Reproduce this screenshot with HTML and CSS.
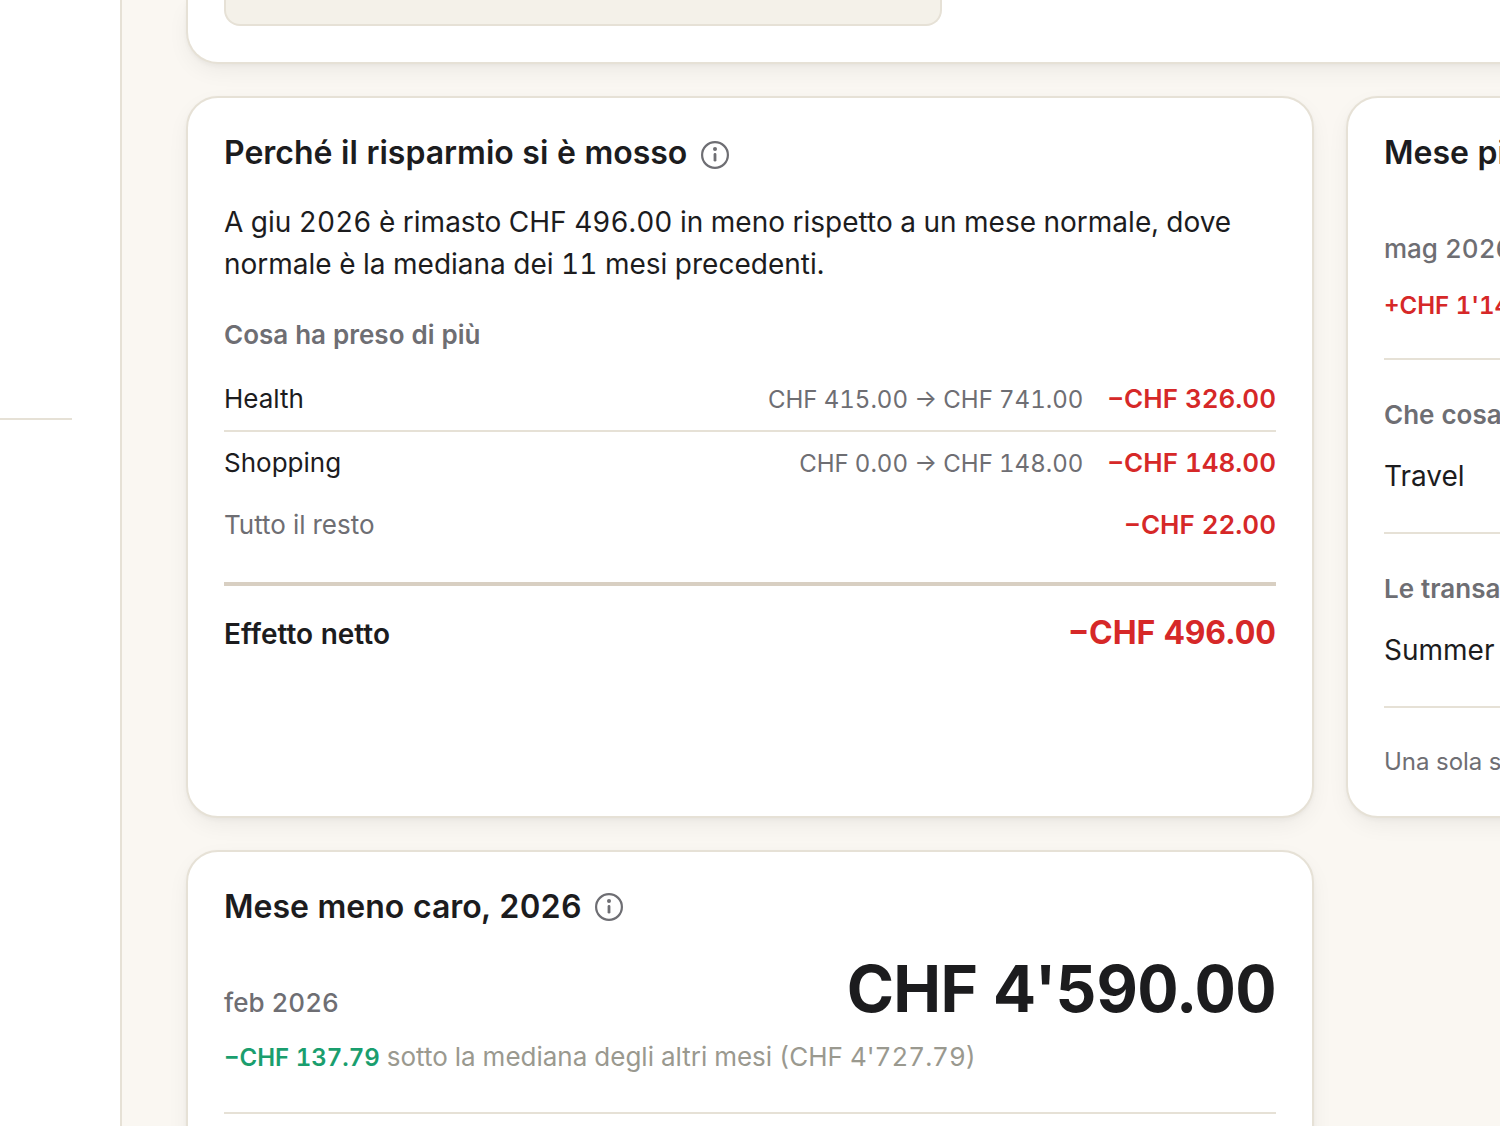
FILE: index.html
```html
<!DOCTYPE html>
<html lang="it">
<head>
<meta charset="UTF-8">
<title>Risparmio</title>
<link rel="stylesheet" href="styles.css">
</head>
<body>
    <div class="layout">
        <aside class="sidebar">
            <hr class="sidebar-line">
        </aside>
        <main class="content">
            <section class="card hero">
                <div class="panel"></div>
            </section>

            <section class="card why">
                <h2 class="title">Perché il risparmio si è mosso
                    <svg class="info" viewBox="0 0 28 28"><circle cx="14" cy="14" r="12.9"/><path d="M14 13.4v5.8"/><circle class="dot" cx="14" cy="8.1" r="2"/></svg>
                </h2>
                <p class="summary">A giu 2026 è rimasto CHF 496.00 in meno rispetto a un mese normale, dove normale è la mediana dei 11 mesi precedenti.</p>
                <h3 class="subtitle">Cosa ha preso di più</h3>
                <ul class="rows">
                    <li class="row">
                        <span class="name">Health</span>
                        <span class="range">CHF 415.00 → CHF 741.00</span>
                        <span class="amount">−CHF 326.00</span>
                    </li>
                    <li class="row">
                        <span class="name">Shopping</span>
                        <span class="range">CHF 0.00 → CHF 148.00</span>
                        <span class="amount">−CHF 148.00</span>
                    </li>
                    <li class="row rest">
                        <span class="name">Tutto il resto</span>
                        <span class="amount">−CHF 22.00</span>
                    </li>
                </ul>
                <div class="net">
                    <span class="net-label">Effetto netto</span>
                    <span class="net-amount">−CHF 496.00</span>
                </div>
            </section>

            <section class="card month">
                <h2 class="title">Mese più caro, 2026</h2>
                <div class="figure">
                    <span class="when">mag 2026</span>
                </div>
                <p class="delta high"><strong class="up">+CHF 1'140.00</strong></p>
                <div class="block">
                    <h3 class="block-title">Che cosa</h3>
                    <p class="entry">Travel</p>
                </div>
                <div class="block">
                    <h3 class="block-title">Le transazioni</h3>
                    <p class="entry">Summer</p>
                </div>
                <p class="note">Una sola spesa</p>
            </section>

            <section class="card month">
                <h2 class="title">Mese meno caro, 2026
                    <svg class="info" viewBox="0 0 28 28"><circle cx="14" cy="14" r="12.9"/><path d="M14 13.4v5.8"/><circle class="dot" cx="14" cy="8.1" r="2"/></svg>
                </h2>
                <div class="figure">
                    <span class="when">feb 2026</span>
                    <span class="total">CHF 4'590.00</span>
                </div>
                <p class="delta"><strong class="down">−CHF 137.79</strong> sotto la mediana degli altri mesi (CHF 4'727.79)</p>
                <div class="block"></div>
            </section>
        </main>
    </div>
</body>
</html>
```
FILE: styles.css
```css
* {
    box-sizing: border-box;
    margin: 0;
    padding: 0;
}
body {
    height: 1126px;
    overflow: hidden;
    background: #faf7f2;
    color: #1c1c1e;
    font-family: Inter, sans-serif;
    font-size: 28px;
    font-variant-numeric: tabular-nums;
}

/* page layout */
.layout {
    display: flex;
    height: 1126px;
    overflow: hidden;
}
.sidebar {
    flex: none;
    width: 122px;
    padding: 418px 48px 0 0;
    background: #fff;
    border-right: 2px solid #e6e1d6;
}
.sidebar-line {
    border: none;
    border-top: 2px solid #e6e1d6;
}
.content {
    flex: none;
    display: grid;
    grid-template-columns: 1128px 1128px;
    grid-template-rows: 64px 722px 722px;
    gap: 32px;
    margin-left: 64px;
}

/* cards */
.card {
    padding: 36px;
    background: #fff;
    border: 2px solid #e6e1d6;
    border-radius: 32px;
    box-shadow: 0 2px 4px rgba(28, 28, 30, 0.04), 0 8px 24px -4px rgba(28, 28, 30, 0.07);
}
.hero {
    grid-column: 1 / 3;
    padding-top: 0;
    border-top: none;
    border-radius: 0 0 32px 32px;
}
.panel {
    width: 718px;
    height: 26px;
    background: #f4f1e9;
    border: 2px solid #e6e1d6;
    border-top: none;
    border-radius: 0 0 16px 16px;
}
.title {
    display: flex;
    align-items: center;
    gap: 14px;
    font-size: 32px;
    font-weight: 600;
    line-height: 38px;
}
.info {
    width: 28px;
    height: 28px;
    margin-top: 3px;
    fill: none;
    stroke: #6e6e73;
    stroke-width: 2.2;
}
.month .title {
    gap: 13px;
}
.month .info {
    margin-top: 0;
}
.info path {
    stroke-width: 2.8;
    stroke-linecap: round;
}
.info .dot {
    fill: #6e6e73;
    stroke: none;
}

/* saving explanation */
.summary {
    margin-top: 29px;
    line-height: 42px;
}
.subtitle {
    margin-top: 30px;
    color: #6e6e73;
    font-size: 26px;
    font-weight: 600;
    line-height: 40px;
}
.rows {
    margin-top: 13px;
    list-style: none;
}
.row {
    display: flex;
    align-items: baseline;
    height: 64px;
    border-bottom: 2px solid #e6e1d6;
    font-size: 26px;
    line-height: 62px;
}
.row:nth-last-child(-n+2) {
    height: 62px;
    border-bottom: none;
}
.name {
    flex: 1;
}
.rest .name {
    color: #6e6e73;
}
.range {
    color: #6e6e73;
    font-size: 24px;
    word-spacing: -0.25px;
}
.amount {
    margin-left: 24px;
    color: #d62828;
    font-weight: 600;
}
.net {
    display: flex;
    align-items: baseline;
    justify-content: space-between;
    margin-top: 26px;
    padding-top: 24px;
    border-top: 4px solid #d8cfc2;
    line-height: 46px;
}
.net-label {
    font-weight: 600;
}
.net-amount {
    color: #d62828;
    font-size: 32px;
    font-weight: 700;
}

/* month cards */
.figure {
    display: flex;
    align-items: baseline;
    justify-content: space-between;
    height: 70px;
    margin-top: 22px;
    line-height: 77px;
}
/* keeps the baseline when there is no total */
.figure::before {
    content: "";
    height: 64px;
}
.when {
    flex: 1;
    color: #6e6e73;
    font-size: 26px;
    font-weight: 500;
}
.total {
    font-size: 64px;
    font-weight: 700;
    letter-spacing: -0.64px;
}
.delta {
    height: 40px;
    margin-top: 19px;
    color: #9a998f;
    font-size: 26px;
    line-height: 40px;
}
.delta.high {
    padding-top: 2px;
}
.delta strong {
    font-size: 24px;
    font-weight: 600;
}
.up {
    color: #d62828;
}
.down {
    color: #1a9e6e;
}
.block {
    height: 174px;
    padding-top: 36px;
    border-top: 2px solid #e6e1d6;
}
.delta + .block {
    margin-top: 35px;
}
.block-title {
    color: #6e6e73;
    font-size: 26px;
    font-weight: 600;
    line-height: 38px;
}
.entry {
    margin-top: 20px;
    line-height: 44px;
}
.note {
    padding-top: 36px;
    border-top: 2px solid #e6e1d6;
    color: #6e6e73;
    font-size: 24px;
    line-height: 36px;
}
```
